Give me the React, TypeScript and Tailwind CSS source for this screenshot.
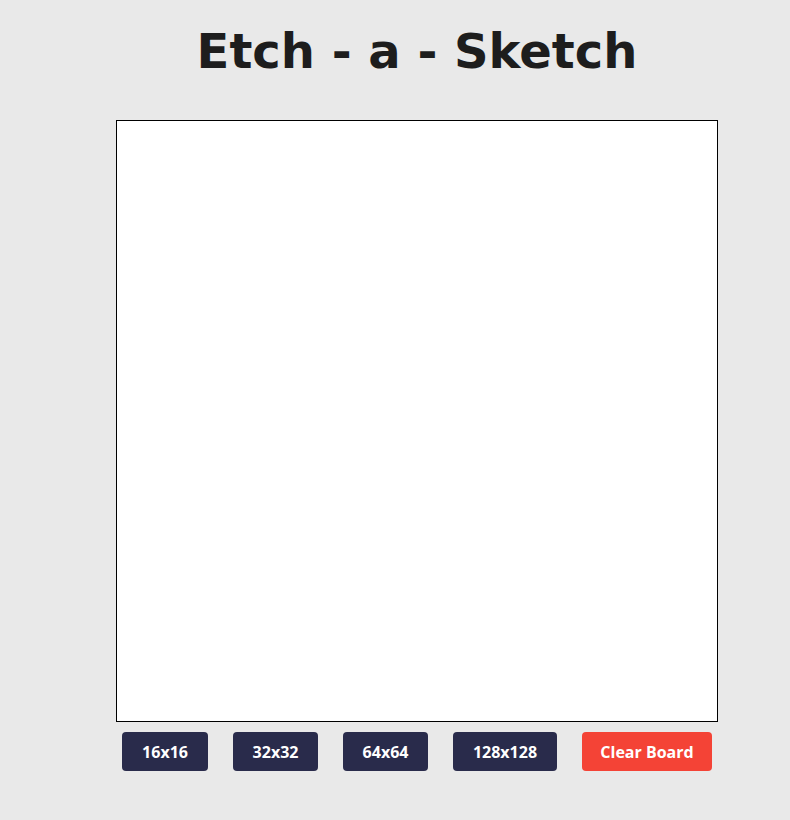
export default function App() {
  const sizes = [
    { label: '16x16', width: 'w-[86px]' },
    { label: '32x32', width: 'w-[85px]' },
    { label: '64x64', width: 'w-[85px]' },
    { label: '128x128', width: 'w-[104px]' },
  ];

  return (
    <div className="min-h-[820px] w-full bg-[#e9e9e9] pl-[44px]">
      <div className="flex flex-col items-center">
        <h1 className="mt-[21px] text-[48px] font-bold leading-[60px] text-[#1d1d1d] [font-family:'DejaVu_Sans',sans-serif]">
          Etch - a - Sketch
        </h1>
        <div className="mt-[39px] h-[602px] w-[602px] border border-black bg-white"></div>
        <div className="mt-[10px] flex gap-[25px] [font-family:'Open_Sans',sans-serif]">
          {sizes.map(size => (
            <button
              key={size.label}
              className={`h-[39px] ${size.width} rounded-[4px] bg-[#292b4b] text-[16px] font-bold text-white`}
            >
              {size.label}
            </button>
          ))}
          <button className="h-[39px] w-[130px] rounded-[4px] bg-[#f44336] text-[16px] font-bold text-white">
            Clear Board
          </button>
        </div>
      </div>
    </div>
  );
}
